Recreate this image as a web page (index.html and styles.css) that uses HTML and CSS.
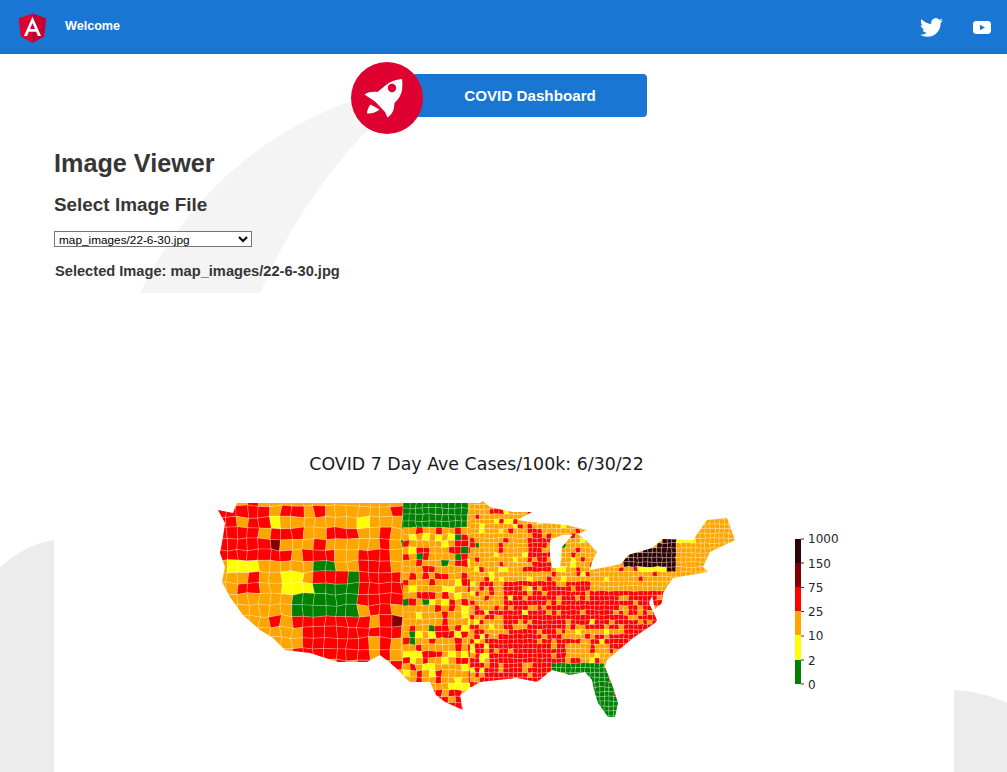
FILE: index.html
```html
<!DOCTYPE html>
<html lang="en">
<head>
    <meta charset="UTF-8">
    <meta name="viewport" content="width=device-width, initial-scale=1.0">
    <title>COVID Dashboard - Image Viewer</title>
    <link rel="stylesheet" href="styles.css">
</head>
<body>
    <!-- Grey background swooshes -->
    <svg class="swoosh" width="1007" height="772" viewBox="0 0 1007 772" aria-hidden="true">
        <path class="swoosh-light" d="M362 97C270 128 190 190 140 293L260 293C285 235 325 172 372 126Z"/>
        <path class="swoosh-dark" d="M0 568C15 553 34 543 54 540L54 772L0 772Z"/>
        <path class="swoosh-dark" d="M954 690C974 691 992 696 1007 703L1007 772L954 772Z"/>
    </svg>

    <header class="toolbar">
        <svg class="logo" viewBox="0 0 250 250" aria-label="Angular">
            <polygon fill="#dd0031" points="125,30 31.9,63.2 46.1,186.3 125,230"/>
            <polygon fill="#c3002f" points="125,30 218.1,63.2 203.9,186.3 125,230"/>
            <path fill="#fff" d="M125 52.1L66.8 182.6h21.7l11.7-29.2h49.4l11.7 29.2h21.7L125 52.1zM142 135.4H108l17-40.9 17 40.9z"/>
        </svg>
        <span class="welcome">Welcome</span>
        <span class="spacer"></span>
        <svg class="twitter" viewBox="0 0 24 24" aria-label="Twitter">
            <path fill="#fff" d="M23.953 4.57a10 10 0 01-2.825.775 4.958 4.958 0 002.163-2.723c-.951.555-2.005.959-3.127 1.184a4.92 4.92 0 00-8.384 4.482C7.69 8.095 4.067 6.13 1.64 3.162a4.822 4.822 0 00-.666 2.475c0 1.71.87 3.213 2.188 4.096a4.904 4.904 0 01-2.228-.616v.06a4.923 4.923 0 003.946 4.827 4.996 4.996 0 01-2.212.085 4.936 4.936 0 004.604 3.417 9.867 9.867 0 01-6.102 2.105c-.39 0-.779-.023-1.17-.067a13.995 13.995 0 007.557 2.209c9.053 0 13.998-7.496 13.998-13.985 0-.21 0-.42-.015-.63A9.935 9.935 0 0024 4.59z"/>
        </svg>
        <svg class="youtube" viewBox="0 0 18 13" aria-label="YouTube">
            <rect fill="#fff" width="18" height="13" rx="3.4"/>
            <polygon fill="#1976d2" points="7,3.7 12,6.5 7,9.3"/>
        </svg>
    </header>

    <main class="content">
        <div class="launch">
            <svg class="rocket" viewBox="0 0 72 72" aria-hidden="true">
                <circle cx="36" cy="36" r="36" fill="#dd0031"/>
                <path fill="#fff" d="M51 17C44 17.500 39 19.500 35 23L26.500 30C22 29.500 17 30 13.500 32.500L24 39.500L34 50L36.500 55.500C39.500 53.500 42.500 50 43 45.500L43.500 41C47 37.500 50 34 51 28C51.500 24 51.500 20.500 51 17Z"/>
                <circle cx="41" cy="26" r="4.200" fill="#dd0031"/>
                <path fill="#fff" d="M19.500 42.500L28.500 47.500C25 50.500 20.500 52 16 51.500C16 48 17.500 45 19.500 42.500Z"/>
            </svg>
            <a class="launch-btn">COVID Dashboard</a>
        </div>

        <h1 class="viewer-title">Image Viewer</h1>
        <h2 class="viewer-sub">Select Image File</h2>
        <select class="file-select">
            <option>map_images/22-6-30.jpg</option>
        </select>
        <p class="selected">Selected Image: map_images/22-6-30.jpg</p>

        <figure class="map-figure">
            <svg id="map" width="900" height="479" viewBox="54 293 900 479">
                <defs>
                    <clipPath id="us-clip">
                        <path id="us-path" d=""/>
                    </clipPath>
                    <filter id="soft" x="0" y="0" width="100%" height="100%">
                        <feGaussianBlur stdDeviation="0.35"/>
                    </filter>
                </defs>
                <text class="map-title" x="476.500" y="470" text-anchor="middle">COVID 7 Day Ave Cases/100k: 6/30/22</text>
                <g filter="url(#soft)">
                    <g id="counties" clip-path="url(#us-clip)"></g>
                </g>

                <g class="colorbar">
                    <rect x="795" y="539" width="6" height="24.200" fill="#2e0505"/>
                    <rect x="795" y="563" width="6" height="24.300" fill="#800000"/>
                    <rect x="795" y="587" width="6" height="24.300" fill="#ff0000"/>
                    <rect x="795" y="611" width="6" height="24.300" fill="#ffa500"/>
                    <rect x="795" y="635.500" width="6" height="24.300" fill="#ffff00"/>
                    <rect x="795" y="660" width="6" height="24" fill="#008000"/>
                    <path class="ticks" d="M801 539h3M801 563h3M801 587.500h3M801 611.500h3M801 636h3M801 660h3M801 684h3"/>
                    <text x="808" y="543">1000</text>
                    <text x="808" y="568">150</text>
                    <text x="808" y="592">75</text>
                    <text x="808" y="616">25</text>
                    <text x="808" y="640">10</text>
                    <text x="808" y="665">2</text>
                    <text x="808" y="689">0</text>
                </g>
            </svg>
        </figure>
    </main>

    <script src="map.js"></script>
</body>
</html>
```

FILE: styles.css
```css
html, body {
    height: 772px;
    overflow: hidden;
}
body {
    margin: 0;
    font-family: "Liberation Sans", Arial, sans-serif;
    color: #363636;
    background: #fff;
}
.swoosh {
    position: absolute;
    top: 0;
    left: 0;
}
.swoosh-light {
    fill: #f4f4f4;
}
.swoosh-dark {
    fill: #ececec;
}
.toolbar {
    position: relative;
    height: 54px;
    display: flex;
    align-items: center;
    background: #1976d2;
    color: #fff;
    padding: 0 16px 0 13px;
}
.logo {
    width: 37px;
    height: 37px;
    margin-left: 1px;
}
.welcome {
    margin-left: 14px;
    padding-bottom: 2px;
    font-size: 12.600px;
    font-weight: bold;
}
.spacer {
    flex: 1;
}
.twitter {
    width: 23px;
    height: 23px;
}
.youtube {
    width: 18px;
    height: 13px;
    margin-left: 30px;
}
.content {
    position: relative;
    padding-left: 54px;
}
.launch {
    display: flex;
    justify-content: center;
    align-items: flex-start;
    padding: 8px 64px 0 0;
}
.rocket {
    width: 72px;
    height: 72px;
    position: relative;
}
.launch-btn {
    width: 233px;
    height: 43px;
    margin: 12px 0 0 -11px;
    padding-left: 2px;
    background: #1976d2;
    border-radius: 4px;
    color: #fff;
    font-size: 15.200px;
    font-weight: bold;
    line-height: 43px;
    text-align: center;
}
.viewer-title {
    margin: 14px 0 0;
    font-size: 25.200px;
    line-height: 30px;
}
.viewer-sub {
    margin: 16px 0 0;
    font-size: 18.900px;
    line-height: 22px;
}
.file-select {
    display: block;
    width: 198px;
    height: 16px;
    margin: 15px 0 0;
    font-family: "Liberation Sans", Arial, sans-serif;
    font-size: 11.800px;
    padding: 0;
    background: #fff;
}
.selected {
    margin: 15px 0 0 1px;
    font-size: 14.650px;
    line-height: 18px;
    font-weight: bold;
}
.map-figure {
    margin: 13px 0 0;
    width: 900px;
    height: 479px;
    background: #fff;
}
.map-figure svg {
    display: block;
}
.map-title {
    font-family: "DejaVu Sans", sans-serif;
    font-size: 17.400px;
    fill: #1a1a1a;
}
.colorbar text {
    font-family: "DejaVu Sans", sans-serif;
    font-size: 12px;
    fill: #262626;
}
.ticks {
    stroke: #333;
    stroke-width: 1;
    fill: none;
}
```

FILE: map.js
```js
// Draws the county map: an outline of the US filled with small county cells
var RED = '#ff0000', ORANGE = '#ffa500', YELLOW = '#ffff00', GREEN = '#008000', DARK = '#800000', BLACK = '#2e0505';

var outline = [
    [218,510],[233,513],[237,503],[480,503],[483,501],[490,507],[513,512],[532,512],[517,520],[530,522],
    [543,523],[566,525],[587,530],[578,534],[562,535],[550,540],[550,556],[552,568],[560,568],[562,547],
    [575,532],[588,542],[597,552],[592,562],[590,570],[617,565],[622,563],[628,555],[652,548],[663,539],
    [693,540],[707,520],[727,518],[735,540],[710,552],[703,567],[708,572],[690,575],[673,578],[663,593],
    [662,603],[655,609],[652,596],[649,603],[657,620],[655,623],[633,638],[607,660],[605,667],[613,687],
    [618,703],[615,717],[608,717],[598,703],[594,690],[592,680],[585,672],[570,675],[552,670],[537,682],
    [517,678],[480,682],[470,688],[460,695],[463,710],[445,702],[436,695],[430,682],[410,682],[395,667],
    [380,655],[367,662],[338,662],[310,653],[285,650],[273,638],[260,630],[243,615],[230,597],[222,582],
    [225,567],[220,553],[223,537],[225,523]
];

// Zones are tried in order, the first one holding the cell centre sets its colour mix.
// Each zone is [x1, y1, x2, y2, mix] with mix as [colour, weight] pairs.
var zones = [
    // solid patches in the west and plains
    [403,503,467,530, [[GREEN,1]]],
    [313,565,340,574, [[GREEN,1]]],
    [343,574,360,590, [[GREEN,1]]],
    [313,585,360,612, [[GREEN,1]]],
    [296,596,313,614, [[GREEN,1]]],
    [228,565,260,574, [[YELLOW,1]]],
    [282,575,313,596, [[YELLOW,.85],[ORANGE,.15]]],
    [387,620,405,628, [[DARK,1]]],
    [265,538,276,548, [[DARK,1]]],
    // new england and the strip below new york
    [678,539,693,545, [[YELLOW,1]]],
    [678,500,740,580, [[ORANGE,1]]],
    [640,566,668,570, [[YELLOW,1]]],
    // west coast and mountains
    [218,500,262,565, [[RED,.92],[ORANGE,.08]]],
    [262,503,300,530, [[RED,.5],[ORANGE,.45],[YELLOW,.05]]],
    [300,503,345,520, [[ORANGE,.6],[RED,.35],[YELLOW,.05]]],
    [345,503,403,530, [[ORANGE,.62],[YELLOW,.25],[GREEN,.03],[RED,.1]]],
    [262,530,345,565, [[RED,.55],[ORANGE,.45]]],
    [345,530,403,565, [[RED,.5],[ORANGE,.42],[YELLOW,.08]]],
    [250,573,262,592, [[RED,1]]],
    [313,574,343,585, [[RED,1]]],
    [218,565,298,615, [[ORANGE,.9],[RED,.1]]],
    [243,615,298,650, [[ORANGE,.82],[RED,.18]]],
    [298,612,358,665, [[RED,.94],[ORANGE,.06]]],
    [358,565,403,625, [[RED,.78],[ORANGE,.2],[GREEN,.02]]],
    [358,625,403,670, [[RED,.6],[ORANGE,.4]]],
    // plains
    [403,530,470,570, [[ORANGE,.55],[RED,.2],[YELLOW,.17],[GREEN,.08]]],
    [403,570,470,690, [[ORANGE,.56],[YELLOW,.16],[RED,.24],[GREEN,.03],[DARK,.01]]],
    [403,690,470,720, [[RED,.75],[ORANGE,.25]]],
    // midwest and east
    [527,527,550,570, [[RED,.7],[ORANGE,.3]]],
    [490,503,515,525, [[RED,.4],[ORANGE,.5],[YELLOW,.1]]],
    [470,503,590,580, [[ORANGE,.8],[YELLOW,.11],[RED,.08],[GREEN,.01]]],
    [590,540,680,592, [[ORANGE,.9],[RED,.08],[YELLOW,.02]]],
    [565,627,610,667, [[ORANGE,.72],[RED,.23],[YELLOW,.05]]],
    [470,580,505,640, [[ORANGE,.62],[RED,.3],[YELLOW,.08]]],
    [470,640,490,690, [[ORANGE,.3],[YELLOW,.2],[RED,.5]]],
    [470,580,680,700, [[RED,.82],[ORANGE,.17],[YELLOW,.01]]]
];

var florida = [[552,664],[605,664],[625,720],[600,720],[590,685],[575,677],[552,672]];
var newYork = [[622,563],[628,555],[652,548],[663,539],[678,539],[678,568],[673,573],[668,568],[643,566],[622,566]];

var seed = 12345;
function rand() {
    seed = (seed * 16807) % 2147483647;
    return seed / 2147483647;
}

function inside(poly, x, y) {
    var hit = false;
    for (var i = 0, j = poly.length - 1; i < poly.length; j = i++) {
        if ((poly[i][1] > y) !== (poly[j][1] > y) &&
            x < (poly[j][0] - poly[i][0]) * (y - poly[i][1]) / (poly[j][1] - poly[i][1]) + poly[i][0]) {
            hit = !hit;
        }
    }
    return hit;
}

function pick(mix) {
    var r = rand();
    for (var i = 0; i < mix.length; i++) {
        r -= mix[i][1];
        if (r <= 0) return mix[i][0];
    }
    return mix[0][0];
}

function cellColor(x, y) {
    if (inside(florida, x, y)) return GREEN;
    if (inside(newYork, x, y)) return BLACK;
    for (var i = 0; i < zones.length; i++) {
        var z = zones[i];
        if (x >= z[0] && x < z[2] && y >= z[1] && y < z[3]) return pick(z[4]);
    }
    return ORANGE;
}

// One lattice of jittered four-sided cells for a band of the map
function lattice(x1, x2, size) {
    var cols = Math.ceil((x2 - x1) / size);
    var rows = Math.ceil(230 / size);
    var pts = [];
    var c, r;
    for (c = 0; c <= cols; c++) {
        pts[c] = [];
        for (r = 0; r <= rows; r++) {
            var edge = c === 0 || c === cols;
            pts[c][r] = [
                x1 + c * size + (edge ? 0 : (rand() - 0.5) * size * 0.3),
                495 + r * size + (rand() - 0.5) * size * 0.25
            ];
        }
    }
    var out = '';
    for (c = 0; c < cols; c++) {
        for (r = 0; r < rows; r++) {
            var a = pts[c][r], b = pts[c + 1][r], d = pts[c + 1][r + 1], e = pts[c][r + 1];
            var fill = cellColor((a[0] + d[0]) / 2, (a[1] + d[1]) / 2);
            out += '<polygon fill="' + fill + '" points="' +
                [a, b, d, e].map(function(p) { return p[0].toFixed(1) + ',' + p[1].toFixed(1); }).join(' ') + '"/>';
        }
    }
    return out;
}

document.getElementById('us-path').setAttribute('d', 'M' + outline.map(function(p) { return p.join(' '); }).join('L') + 'Z');

var group = document.getElementById('counties');
group.setAttribute('stroke', 'rgba(255,255,255,.45)');
group.setAttribute('stroke-width', '.5');
group.innerHTML = lattice(215, 403, 11) + lattice(403, 470, 6.5) + lattice(470, 740, 4.8);
```
